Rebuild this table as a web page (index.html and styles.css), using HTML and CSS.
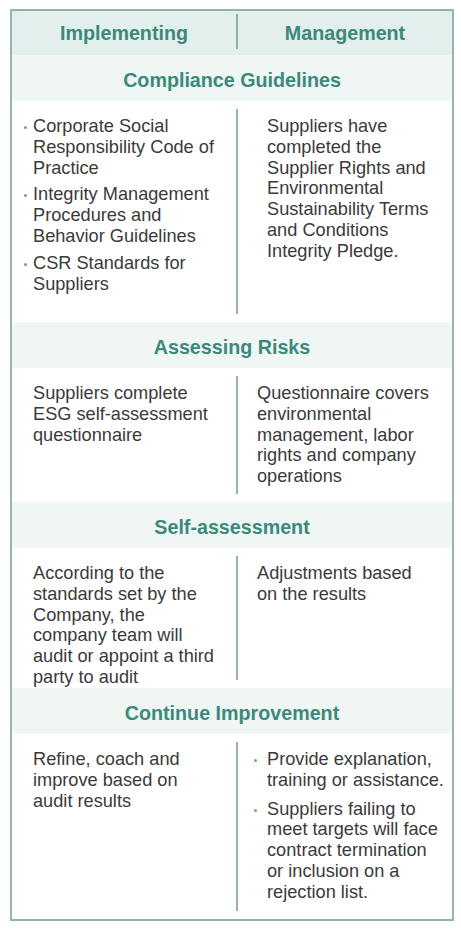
FILE: index.html
```html
<!DOCTYPE html>
<html lang="en">
<head>
<meta charset="utf-8">
<title>Supplier Management Process</title>
<link rel="stylesheet" href="styles.css">
</head>
<body>
<div class="table">
  <div class="head">
    <div class="head-cell">Implementing</div>
    <div class="head-cell head-cell--right">Management</div>
  </div>

  <section class="stage">
    <h2 class="band">Compliance Guidelines</h2>
    <div class="row row--compliance">
      <div class="cell cell--left">
        <ul class="list">
          <li>Corporate Social Responsibility Code of Practice</li>
          <li>Integrity Management Procedures and Behavior Guidelines</li>
          <li>CSR Standards for Suppliers</li>
        </ul>
      </div>
      <div class="cell cell--right cell--indent">
        <p>Suppliers have completed the Supplier Rights and Environmental Sustainability Terms and Conditions Integrity Pledge.</p>
      </div>
    </div>
  </section>

  <section class="stage">
    <h2 class="band">Assessing Risks</h2>
    <div class="row row--risks">
      <div class="cell cell--left">
        <p>Suppliers complete ESG self-assessment questionnaire</p>
      </div>
      <div class="cell cell--right">
        <p>Questionnaire covers environmental management, labor rights and company operations</p>
      </div>
    </div>
  </section>

  <section class="stage">
    <h2 class="band">Self-assessment</h2>
    <div class="row row--self">
      <div class="cell cell--left">
        <p>According to the standards set by the Company, the company team will audit or appoint a third party to audit</p>
      </div>
      <div class="cell cell--right">
        <p>Adjustments based on the results</p>
      </div>
    </div>
  </section>

  <section class="stage">
    <h2 class="band">Continue Improvement</h2>
    <div class="row row--improve">
      <div class="cell cell--left">
        <p>Refine, coach and improve based on audit results</p>
      </div>
      <div class="cell cell--right cell--indent">
        <ul class="list list--wide">
          <li>Provide explanation, training or assistance.</li>
          <li>Suppliers failing to meet targets will face contract termination or inclusion on a rejection list.</li>
        </ul>
      </div>
    </div>
  </section>
</div>
</body>
</html>
```

FILE: styles.css
```css
* {
  box-sizing: border-box;
}

html, body {
  margin: 0;
  padding: 0;
  background: #ffffff;
}

body {
  font-family: "Liberation Sans", Arial, sans-serif;
  color: #3a3a3a;
}

.table {
  margin: 9px 0 0 10px;
  width: 444px;
  border: 2px solid #98b3af;
}

.head {
  display: flex;
  background: #e2efec;
  padding: 3px 0 6px;
}

.head-cell {
  width: 224px;
  padding-top: 4px;
  line-height: 31px;
  text-align: center;
  font-weight: bold;
  font-size: 19.7px;
  color: #3b897b;
}

.head-cell--right {
  flex: 1;
  border-left: 2px solid #8fb0aa;
}

.band {
  margin: 0;
  padding: 14px 0 10px;
  line-height: 22px;
  background: #eff6f4;
  text-align: center;
  font-weight: bold;
  font-size: 19.7px;
  color: #3b897b;
}

.row {
  display: flex;
  padding: 8px 0;
  font-size: 18.2px;
  line-height: 20.8px;
}

.row--compliance { height: 221px; }
.row--risks { height: 134px; }
.row--self { height: 140px; }
.row--improve { height: 185px; }

.cell {
  padding-top: 7px;
}

.cell p {
  margin: 0;
}

.cell--left {
  width: 224px;
  padding-left: 21px;
  padding-right: 14px;
}

.cell--right {
  flex: 1;
  border-left: 2px solid #98b3af;
  padding-left: 19px;
  padding-right: 19px;
}

.cell--indent {
  padding-left: 29px;
  padding-right: 6px;
}

.list {
  list-style: none;
  margin: 0;
  padding: 0;
}

.list li {
  display: flex;
  margin-bottom: 6px;
}

.list li::before {
  content: "";
  flex: none;
  width: 3px;
  height: 3px;
  border-radius: 50%;
  background: #6f9e97;
  margin: 10px 6px 0 -9px;
}

.list--wide li {
  margin-bottom: 8px;
}

.list--wide li::before {
  margin: 10px 10px 0 -13px;
}
```
